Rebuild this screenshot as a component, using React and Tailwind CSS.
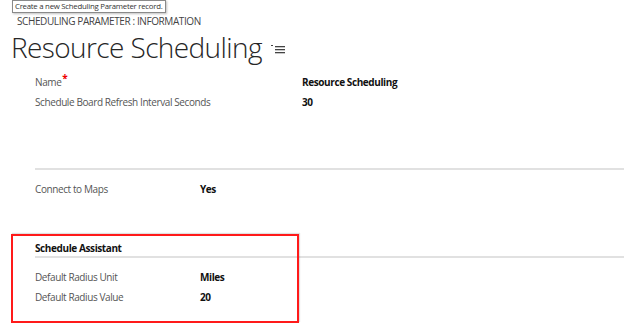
export default function App() {
  const sans = { fontFamily: '"Open Sans", "Noto Sans", sans-serif' };
  return (
    <div className="relative w-[624px] h-[323px] bg-white overflow-hidden" style={sans}>
      <div className="absolute left-[12px] top-0 h-[13px] w-[154px] px-[2px] border border-[#8a8a8a] bg-white text-[7.8px] leading-[11px] tracking-[-0.25px] text-[#333] whitespace-nowrap shadow-[1px_1px_2px_rgba(0,0,0,0.25)]">
        Create a new Scheduling Parameter record.
      </div>
      <div className="pt-[14px] pl-[17px] text-[10px] leading-[14px] text-[#444] tracking-[-0.4px]">
        SCHEDULING PARAMETER : INFORMATION
      </div>
      <div className="flex items-center pl-[11px] mt-[1px] h-[36px]">
        <span className="text-[28px] font-light text-[#262626] leading-[36px] tracking-[-0.6px]">Resource Scheduling</span>
        <svg width="16" height="12" viewBox="0 0 16 12" className="ml-[9px] mt-[6px]">
          <rect x="0" y="1" width="2" height="1" fill="#444" />
          <rect x="4" y="2" width="10" height="1.3" fill="#444" />
          <rect x="4" y="5" width="10" height="1.3" fill="#444" />
          <rect x="4" y="8" width="10" height="1.3" fill="#444" />
        </svg>
      </div>
      <div className="pl-[35px] mt-[7px] text-[10px] tracking-[-0.4px]">
        <div className="flex h-[20px] items-center">
          <span className="w-[267px] text-[#555]">Name<span className="text-[#e00] relative -top-[4px] ml-[1px] font-bold">*</span></span>
          <span className="font-bold text-[#111]">Resource Scheduling</span>
        </div>
        <div className="flex h-[20px] items-center">
          <span className="w-[267px] text-[#555]">Schedule Board Refresh Interval Seconds</span>
          <span className="font-bold text-[#111]">30</span>
        </div>
      </div>
      <div className="ml-[35px] mt-[56px] h-[2px] bg-[#e1e1e1]" />
      <div className="pl-[35px] mt-[9px] text-[10px] tracking-[-0.4px]">
        <div className="flex h-[20px] items-center">
          <span className="w-[165px] text-[#555]">Connect to Maps</span>
          <span className="font-bold text-[#111]">Yes</span>
        </div>
      </div>
      <div className="relative mt-[35px]">
        <div className="absolute left-[11px] top-0 w-[288px] h-[89px] border-2 border-[#ff1a1a] shadow-[1px_-1px_1px_rgba(0,0,0,0.12)] pointer-events-none" />
        <div className="pl-[35px] pt-[8px] text-[10px] tracking-[-0.4px]">
          <div className="font-bold text-[#111] h-[13px] leading-[13px]">Schedule Assistant</div>
          <div className="mt-[1px] h-[2px] bg-[#e1e1e1]" />
          <div className="mt-[9px] flex h-[20px] items-center">
            <span className="w-[165px] text-[#555]">Default Radius Unit</span>
            <span className="font-bold text-[#111]">Miles</span>
          </div>
          <div className="flex h-[20px] items-center">
            <span className="w-[165px] text-[#555]">Default Radius Value</span>
            <span className="font-bold text-[#111]">20</span>
          </div>
        </div>
      </div>
    </div>
  );
}
